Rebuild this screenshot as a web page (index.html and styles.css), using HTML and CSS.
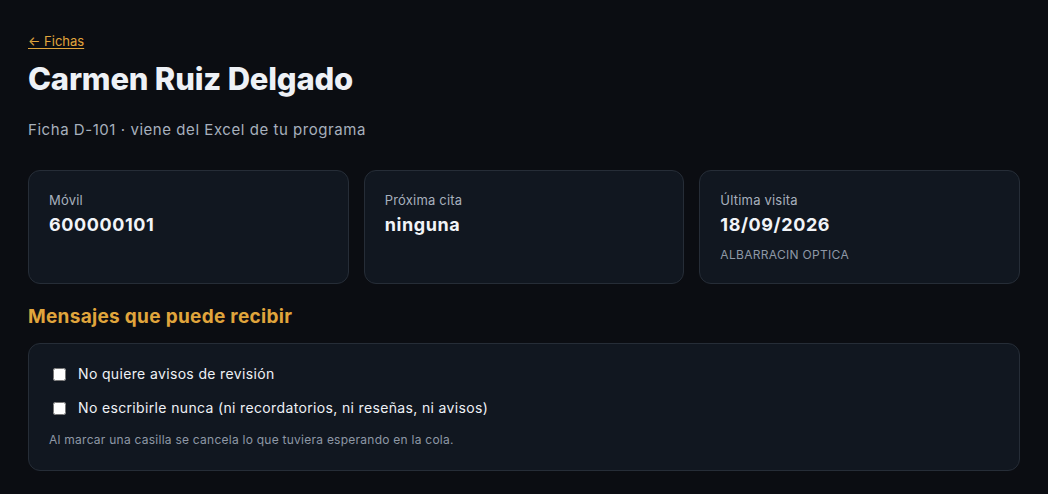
FILE: index.html
```html
<!DOCTYPE html>
<html lang="es">
<head>
<meta charset="utf-8">
<title>Carmen Ruiz Delgado</title>
<link rel="stylesheet" href="styles.css">
</head>
<body>
<main class="page">
  <a class="back" href="#">← Fichas</a>
  <h1 class="title">Carmen Ruiz Delgado</h1>
  <p class="subtitle">Ficha D-101 · viene del Excel de tu programa</p>
  <section class="cards">
    <div class="card">
      <div class="card-label">Móvil</div>
      <div class="card-value">600000101</div>
    </div>
    <div class="card">
      <div class="card-label">Próxima cita</div>
      <div class="card-value">ninguna</div>
    </div>
    <div class="card">
      <div class="card-label">Última visita</div>
      <div class="card-value">18/09/2026</div>
      <div class="card-extra">ALBARRACIN OPTICA</div>
    </div>
  </section>
  <h2 class="section-title">Mensajes que puede recibir</h2>
  <section class="panel">
    <label class="check"><input type="checkbox"><span>No quiere avisos de revisión</span></label>
    <label class="check"><input type="checkbox"><span>No escribirle nunca (ni recordatorios, ni reseñas, ni avisos)</span></label>
    <p class="note">Al marcar una casilla se cancela lo que tuviera esperando en la cola.</p>
  </section>
</main>
</body>
</html>
```
FILE: styles.css
```css
html, body {
  margin: 0;
  background: #0b0d12;
}
body {
  font-family: Inter, "Noto Sans", "Liberation Sans", sans-serif;
  color: #e8ecf2;
}
.page {
  padding: 30px 28px 20px;
}
.back {
  display: inline-block;
  color: #e0a53c;
  font-size: 13px;
  line-height: 18px;
  text-decoration: underline;
  text-underline-offset: 2px;
}
.title {
  margin: 9px 0 0;
  font-size: 31px;
  line-height: 40px;
  font-weight: 800;
  letter-spacing: -0.2px;
  color: #eef1f6;
}
.subtitle {
  margin: 21px 0 0;
  font-size: 15px;
  line-height: 20px;
  letter-spacing: 0.55px;
  color: #a7b0bd;
}
.cards {
  margin-top: 30px;
  display: grid;
  grid-template-columns: repeat(3, 1fr);
  gap: 15px;
}
.card {
  background: #111720;
  border: 1px solid #262d37;
  border-radius: 12px;
  padding: 20px 20px 18px;
  height: 114px;
  box-sizing: border-box;
}
.card-label {
  font-size: 13px;
  line-height: 18px;
  letter-spacing: 0.2px;
  color: #a7b0bd;
}
.card-value {
  margin-top: 5px;
  font-size: 18px;
  line-height: 22px;
  font-weight: 700;
  letter-spacing: 0.6px;
  color: #f1f4f8;
}
.card-extra {
  margin-top: 11px;
  font-size: 12px;
  line-height: 16px;
  letter-spacing: 0.3px;
  color: #8e98a6;
}
.section-title {
  margin: 21px 0 0;
  font-size: 19px;
  line-height: 24px;
  font-weight: 700;
  letter-spacing: 0.3px;
  color: #e0a53c;
}
.panel {
  margin-top: 14px;
  background: #111720;
  border: 1px solid #262d37;
  border-radius: 12px;
  padding: 20px 20px 22px;
}
.check {
  display: flex;
  align-items: center;
  gap: 12px;
  font-size: 14px;
  line-height: 20px;
  letter-spacing: 0.35px;
  color: #eef1f6;
}
.check + .check {
  margin-top: 14px;
}
.check input {
  margin: 0 0 0 4px;
  width: 13px;
  height: 13px;
  accent-color: #e0a53c;
}
.note {
  margin: 14px 0 0;
  font-size: 12px;
  line-height: 16px;
  letter-spacing: 0.25px;
  color: #8e98a6;
}
```
